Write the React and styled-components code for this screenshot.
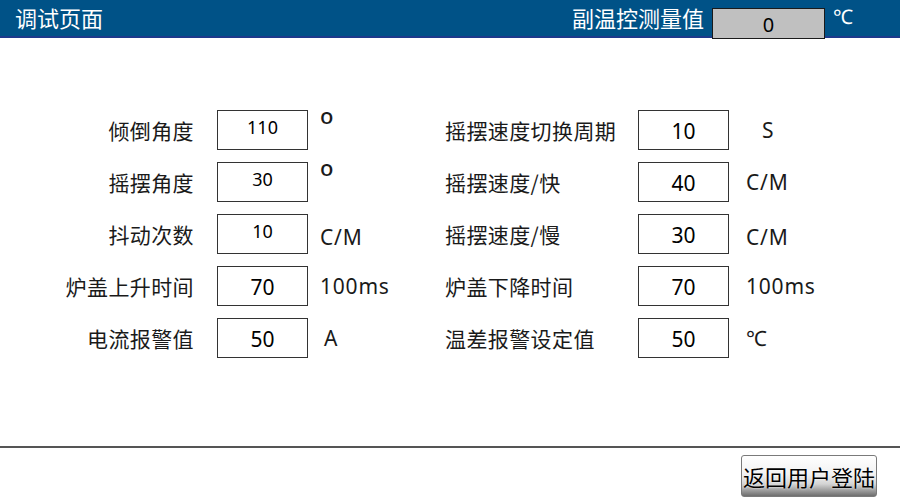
import React from "react";
import styled, { createGlobalStyle } from "styled-components";

const GlobalStyle = createGlobalStyle`
  html, body {
    margin: 0;
    padding: 0;
    background: #ffffff;
  }
  body {
    font-family: "Noto Sans", "Noto Sans CJK SC", sans-serif;
  }
`;

const rows = [
  {
    left: { label: "倾倒角度", value: "110", unit: "o", small: true, unitTop: true },
    right: { label: "摇摆速度切换周期", value: "10", unit: "S", unitPad: 33 },
  },
  {
    left: { label: "摇摆角度", value: "30", unit: "o", small: true, unitTop: true },
    right: { label: "摇摆速度/快", value: "40", unit: "C/M" },
  },
  {
    left: { label: "抖动次数", value: "10", unit: "C/M", small: true, unitLow: true },
    right: { label: "摇摆速度/慢", value: "30", unit: "C/M", unitLow: true },
  },
  {
    left: { label: "炉盖上升时间", value: "70", unit: "100ms" },
    right: { label: "炉盖下降时间", value: "70", unit: "100ms" },
  },
  {
    left: { label: "电流报警值", value: "50", unit: "A", unitPad: 16 },
    right: { label: "温差报警设定值", value: "50", unit: "℃" },
  },
];

const App = () => (
  <Page>
    <GlobalStyle />
    <Header>
      <Title>调试页面</Title>
      <Measure>
        <MeasureLabel>副温控测量值</MeasureLabel>
        <MeasureBox>0</MeasureBox>
        <MeasureUnit>℃</MeasureUnit>
      </Measure>
    </Header>

    <Main>
      <FieldGrid>
        {rows.map((row, i) => (
          <React.Fragment key={i}>
            <Label $side="left">{row.left.label}</Label>
            <ValueBox $small={row.left.small}>{row.left.value}</ValueBox>
            <Unit
              $top={row.left.unitTop}
              $low={row.left.unitLow}
              $pad={row.left.unitPad ?? 12}
              $degree={row.left.unit === "o"}
            >
              {row.left.unit}
            </Unit>
            <Label $side="right">{row.right.label}</Label>
            <ValueBox>{row.right.value}</ValueBox>
            <Unit $low={row.right.unitLow} $pad={row.right.unitPad ?? 17}>
              {row.right.unit}
            </Unit>
          </React.Fragment>
        ))}
      </FieldGrid>
    </Main>

    <Footer>
      <BackButton>返回用户登陆</BackButton>
    </Footer>
  </Page>
);

export default App;

const Page = styled.div`
  width: 900px;
  height: 500px;
  display: flex;
  flex-direction: column;
  overflow: hidden;
`;

const Header = styled.header`
  height: 36px;
  flex-shrink: 0;
  background: #005287;
  border-bottom: 2px solid #1d3a8c;
  display: flex;
  align-items: flex-start;
  justify-content: space-between;
  padding: 0 0 0 15px;
  color: #ffffff;
  font-family: "Noto Sans CJK SC", sans-serif;
`;

const Title = styled.div`
  font-size: 22px;
  line-height: 34px;
`;

const Measure = styled.div`
  display: flex;
  align-items: flex-start;
`;

const MeasureLabel = styled.div`
  font-size: 22px;
  line-height: 34px;
  margin-right: 8px;
`;

const MeasureBox = styled.div`
  margin-top: 8px;
  width: 111px;
  height: 29px;
  background: #c0c0c0;
  border: 1px solid #1a1a1a;
  color: #000000;
  font-family: "Noto Sans", sans-serif;
  font-size: 20px;
  line-height: 31px;
  text-align: center;
  position: relative;
  z-index: 1;
`;

const MeasureUnit = styled.div`
  font-family: "Noto Sans", sans-serif;
  font-size: 20px;
  line-height: 34px;
  margin: 0 47px 0 8px;
`;

const Main = styled.main`
  flex: 1;
  padding-top: 72px;
`;

const FieldGrid = styled.div`
  display: grid;
  grid-template-columns: 217px 91px 137px 193px 91px 1fr;
  grid-auto-rows: 40px;
  row-gap: 12px;
  align-items: center;
`;

const Label = styled.div`
  font-family: "Noto Sans CJK SC", sans-serif;
  font-size: 21px;
  color: #1a1a1a;
  white-space: nowrap;
  letter-spacing: 0.4px;
  text-align: ${(p) => (p.$side === "left" ? "right" : "left")};
  padding-right: ${(p) => (p.$side === "left" ? "23px" : "0")};
`;

const ValueBox = styled.div`
  box-sizing: border-box;
  height: 40px;
  border: 1px solid #333333;
  background: #ffffff;
  color: #000000;
  text-align: center;
  font-family: "Noto Sans", sans-serif;
  font-size: ${(p) => (p.$small ? "18px" : "21px")};
  line-height: ${(p) => (p.$small ? "32px" : "40px")};
`;

const Unit = styled.div`
  align-self: ${(p) => (p.$top ? "start" : "center")};
  padding-left: ${(p) => p.$pad}px;
  margin-top: ${(p) => (p.$low ? "6px" : "0")};
  font-family: "Noto Sans", sans-serif;
  font-size: ${(p) => (p.$degree ? "22px" : "21px")};
  line-height: ${(p) => (p.$degree ? "10px" : "24px")};
  font-weight: ${(p) => (p.$degree ? 500 : 400)};
  letter-spacing: ${(p) => (p.$degree ? "0" : "0.8px")};
  color: #1a1a1a;
`;

const Footer = styled.footer`
  box-sizing: border-box;
  height: 54px;
  flex-shrink: 0;
  border-top: 2px solid #555555;
  display: flex;
  justify-content: flex-end;
  align-items: flex-start;
  padding: 7px 23px 0 0;
`;

const BackButton = styled.button`
  width: 136px;
  height: 42px;
  border: 1px solid #7a7a7a;
  border-radius: 3px;
  background: linear-gradient(
    to bottom,
    #ffffff 0%,
    #f2f2f2 45%,
    #d4d4d4 70%,
    #6e6e6e 100%
  );
  font-family: "Noto Sans CJK SC", sans-serif;
  font-size: 22px;
  color: #000000;
  padding: 0;
  text-shadow: 0 0 2px #ffffff;
`;
